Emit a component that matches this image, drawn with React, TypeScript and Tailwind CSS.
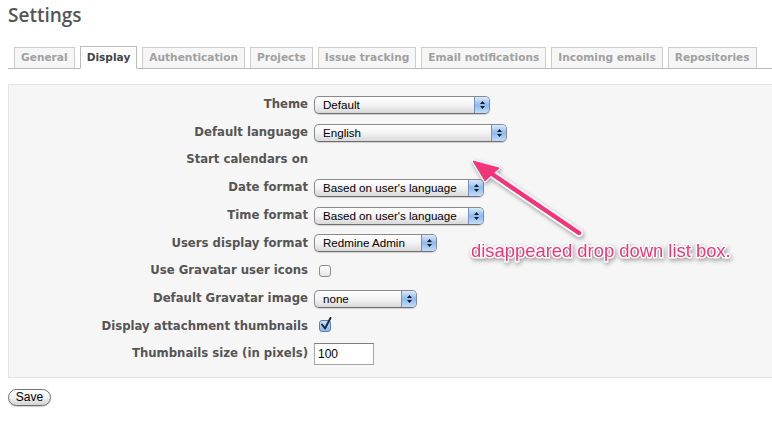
import React from 'react';

const tabs = [
  'General',
  'Display',
  'Authentication',
  'Projects',
  'Issue tracking',
  'Email notifications',
  'Incoming emails',
  'Repositories',
];

function Select({ value, width }: { value: string; width: string }) {
  return (
    <div
      className={`flex h-[18px] items-stretch overflow-hidden rounded-[5px] border border-[#8a8a8a] border-b-[#6e6e6e] bg-gradient-to-b from-white via-[#f3f3f3] to-[#d9d9d9] shadow-[0_1px_1px_rgba(0,0,0,0.15)] ${width}`}
    >
      <span className="flex flex-1 items-center whitespace-nowrap pl-[8px] font-['Liberation_Sans',sans-serif] text-[11.6px] leading-none text-black">
        {value}
      </span>
      <span className="flex w-[15px] shrink-0 flex-col items-center justify-center gap-[2px] border-l border-[#6f93c4] bg-gradient-to-b from-[#dbe9fb] via-[#8dbaf0] to-[#c4ddf8]">
        <svg width="5" height="3" viewBox="0 0 5 3">
          <path d="M2.5 0 L5 3 L0 3 Z" fill="#1c1c1c" />
        </svg>
        <svg width="5" height="3" viewBox="0 0 5 3">
          <path d="M0 0 L5 0 L2.5 3 Z" fill="#1c1c1c" />
        </svg>
      </span>
    </div>
  );
}

function Checkbox({ checked }: { checked?: boolean }) {
  return (
    <div className="relative ml-[5px]">
      <div
        className={
          checked
            ? 'h-[12px] w-[12px] rounded-[3px] border border-[#5d7fae] bg-gradient-to-b from-[#cfe2f8] to-[#8ab6e8]'
            : 'h-[12px] w-[12px] rounded-[3px] border border-[#8d8d8d] bg-gradient-to-b from-white to-[#e6e6e6]'
        }
      />
      {checked && (
        <svg className="absolute left-[1px] top-[-3px]" width="12" height="14" viewBox="0 0 12 14">
          <path d="M2 7.5 L5 11.5 L10.5 1" fill="none" stroke="#1a2a44" strokeWidth="2" strokeLinecap="round" strokeLinejoin="round" />
        </svg>
      )}
    </div>
  );
}

function Row({ label, children }: { label: string; children?: React.ReactNode }) {
  return (
    <div className="flex h-[27.7px] items-center">
      <label className="w-[305px] shrink-0 whitespace-nowrap pr-[6px] text-right text-[11.7px] font-bold text-[#555]">
        {label}
      </label>
      {children}
    </div>
  );
}

export default function App() {
  return (
    <div className="relative h-[423px] w-[772px] overflow-hidden bg-white font-['DejaVu_Sans',Verdana,sans-serif]">
      <div className="pl-[8px] pt-[3px]">
        <h2 className="font-['Open_Sans',sans-serif] text-[19px] font-semibold leading-[24px] text-[#555]">
          Settings
        </h2>

        {/* Tabs */}
        <div className="mt-[20px] flex h-[22px] items-end gap-[5px] border-b border-[#bbb] pl-[6px]">
          {tabs.map((t) =>
            t === 'Display' ? (
              <div
                key={t}
                className="-mb-px flex h-[23px] shrink-0 items-center whitespace-nowrap border border-[#bbb] border-b-white bg-white px-[6px] text-[10.6px] font-bold text-[#444]"
              >
                {t}
              </div>
            ) : (
              <div
                key={t}
                className="flex h-[21px] shrink-0 items-center whitespace-nowrap border border-b-0 border-[#ccc] bg-[#f6f6f6] px-[6px] text-[10.6px] font-bold text-[#a0a0a0]"
              >
                {t}
              </div>
            )
          )}
        </div>

        {/* Settings box */}
        <div className="mt-[15px] border border-r-0 border-[#e4e4e4] bg-[#f6f6f6] pb-[9px] pt-[6px]">
          <Row label="Theme">
            <Select value="Default" width="w-[176px]" />
          </Row>
          <Row label="Default language">
            <Select value="English" width="w-[193px]" />
          </Row>
          <Row label="Start calendars on" />
          <Row label="Date format">
            <Select value="Based on user's language" width="w-[170px]" />
          </Row>
          <Row label="Time format">
            <Select value="Based on user's language" width="w-[170px]" />
          </Row>
          <Row label="Users display format">
            <Select value="Redmine Admin" width="w-[123px]" />
          </Row>
          <Row label="Use Gravatar user icons">
            <Checkbox />
          </Row>
          <Row label="Default Gravatar image">
            <Select value="none" width="w-[103px]" />
          </Row>
          <Row label="Display attachment thumbnails">
            <Checkbox checked />
          </Row>
          <Row label="Thumbnails size (in pixels)">
            <input
              readOnly
              value="100"
              className="h-[22px] w-[60px] border border-[#a5a5a5] border-t-[#7d7d7d] bg-white px-[3px] font-['Liberation_Sans',sans-serif] text-[12px] text-black outline-none"
            />
          </Row>
        </div>

        <button className="mt-[11px] flex h-[17px] w-[43px] items-center justify-center rounded-full border border-[#6f6f6f] bg-gradient-to-b from-white via-[#f0f0f0] to-[#d4d4d4] font-['Liberation_Sans',sans-serif] text-[12px] leading-none text-black shadow-[0_1px_1px_rgba(0,0,0,0.2)]">
          Save
        </button>
      </div>

      {/* Annotation arrow */}
      <svg
        className="pointer-events-none absolute left-0 top-0 drop-shadow-[1px_2px_2px_rgba(0,0,0,0.35)]"
        width="772"
        height="423"
        viewBox="0 0 772 423"
      >
        <g stroke="white" strokeWidth="3" strokeLinejoin="round">
          <line x1="579" y1="233" x2="492" y2="174" strokeWidth="8" strokeLinecap="round" />
          <path d="M473 161 L485 181 L499 168 Z" />
        </g>
        <line x1="579" y1="233" x2="492" y2="174" stroke="#f2357a" strokeWidth="4.5" strokeLinecap="round" />
        <path d="M473 161 L485 181 L499 168 Z" fill="#f2357a" stroke="#f2357a" strokeWidth="1" strokeLinejoin="round" />
      </svg>

      <div className="pointer-events-none absolute left-[471px] top-[240px] font-['Liberation_Sans',sans-serif] text-[18.4px] leading-[22px] text-[#f2357a] [-webkit-text-stroke:3px_white] [paint-order:stroke_fill] drop-shadow-[1px_2px_2px_rgba(0,0,0,0.35)]">
        disappeared drop down list box.
      </div>
    </div>
  );
}
